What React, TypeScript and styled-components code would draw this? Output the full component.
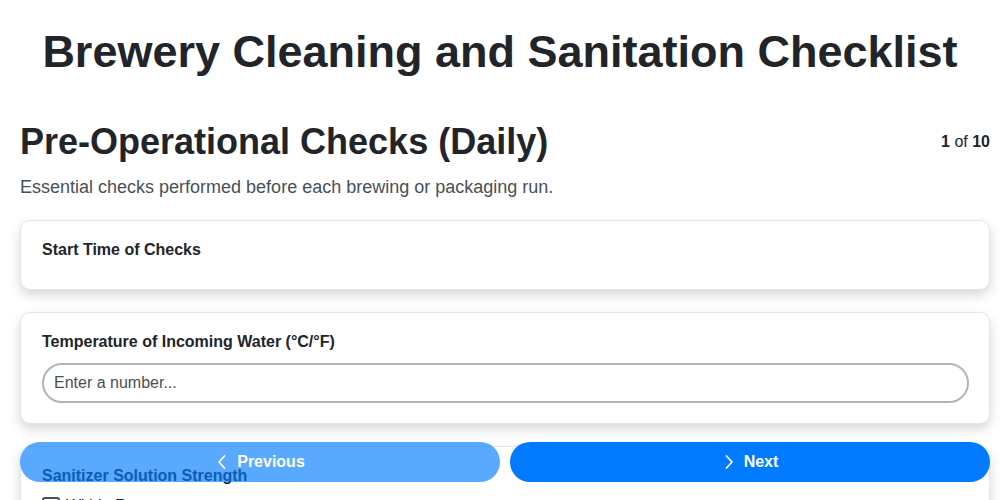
import React from "react";
import styled, { createGlobalStyle } from "styled-components";

const Global = createGlobalStyle`
  html, body { margin: 0; padding: 0; background: #ffffff; }
  body { font-family: "Liberation Sans", Arial, sans-serif; color: #212529; }
  * { box-sizing: border-box; }
`;

const Page = styled.div`
  padding: 0 10px 80px 20px;
`;

const Title = styled.h1`
  margin: 25px -10px 41px -20px;
  text-align: center;
  font-size: 45px;
  line-height: 54px;
  font-weight: 700;
  color: #212529;
  white-space: nowrap;
`;

const SectionHeader = styled.div`
  display: flex;
  justify-content: space-between;
  align-items: flex-start;
`;

const SectionTitle = styled.h2`
  margin: 0;
  font-size: 36px;
  line-height: 44px;
  font-weight: 700;
  color: #212529;
`;

const Counter = styled.div`
  font-size: 16px;
  line-height: 20px;
  margin-top: 12px;
  color: #212529;
  b { font-weight: 700; }
`;

const Description = styled.p`
  margin: 12px 0 22px;
  font-size: 18px;
  line-height: 22px;
  color: #495057;
`;

const Cards = styled.div`
  display: flex;
  flex-direction: column;
  gap: 22px;
`;

const Card = styled.div`
  background: #fff;
  border: 1px solid #e4e4ee;
  border-radius: 10px;
  padding: 20px 20px 20px 21px;
  box-shadow: 0 5px 12px rgba(0, 0, 0, 0.16);
`;

const Label = styled.label<{ $gap?: number }>`
  display: block;
  font-size: 16px;
  line-height: 18px;
  font-weight: 700;
  color: #212529;
  margin-bottom: ${(p) => p.$gap ?? 12}px;
`;

const TextInput = styled.input`
  display: block;
  width: 100%;
  height: 40px;
  border: 2px solid #adb5bd;
  border-radius: 20px;
  padding: 0 10px;
  font-family: "Liberation Sans", Arial, sans-serif;
  font-size: 16px;
  color: #212529;
  outline: none;
  &::placeholder { color: #4a4f55; }
`;

const CheckRow = styled.label`
  display: flex;
  align-items: center;
  gap: 6px;
  font-size: 16px;
  color: #212529;
`;

const Box = styled.span`
  width: 18px;
  height: 18px;
  border: 2px solid #495057;
  border-radius: 3px;
`;

const NavBar = styled.div`
  position: fixed;
  left: 20px;
  right: 10px;
  bottom: 18px;
  display: flex;
  gap: 10px;
`;

const NavButton = styled.button<{ $disabled?: boolean }>`
  flex: 1;
  height: 40px;
  border: none;
  border-radius: 20px;
  background: #007bff;
  color: #fff;
  font-family: "Liberation Sans", Arial, sans-serif;
  font-size: 16px;
  font-weight: 700;
  display: flex;
  align-items: center;
  justify-content: center;
  gap: 8px;
  opacity: ${(p) => (p.$disabled ? 0.65 : 1)};
`;

const Chevron = ({ dir }: { dir: "left" | "right" }) => (
  <svg width="14" height="16" viewBox="0 0 14 16" fill="none" stroke="#fff" strokeWidth="1.8" strokeLinecap="round" strokeLinejoin="round">
    {dir === "left" ? <path d="M9.5 2 L4 8 L9.5 14" /> : <path d="M4.5 2 L10 8 L4.5 14" />}
  </svg>
);

export default function App() {
  return (
    <>
      <Global />
      <Page>
        <Title>Brewery Cleaning and Sanitation Checklist</Title>
        <SectionHeader>
          <SectionTitle>Pre-Operational Checks (Daily)</SectionTitle>
          <Counter>
            <b>1</b> of <b>10</b>
          </Counter>
        </SectionHeader>
        <Description>Essential checks performed before each brewing or packaging run.</Description>
        <Cards>
          <Card>
            <Label $gap={10}>Start Time of Checks</Label>
          </Card>
          <Card>
            <Label>Temperature of Incoming Water (°C/°F)</Label>
            <TextInput type="text" placeholder="Enter a number..." />
          </Card>
          <Card>
            <Label>Sanitizer Solution Strength</Label>
            <CheckRow>
              <Box />
              Within Range
            </CheckRow>
          </Card>
        </Cards>
      </Page>
      <NavBar>
        <NavButton $disabled>
          <Chevron dir="left" />
          Previous
        </NavButton>
        <NavButton>
          <Chevron dir="right" />
          Next
        </NavButton>
      </NavBar>
    </>
  );
}
